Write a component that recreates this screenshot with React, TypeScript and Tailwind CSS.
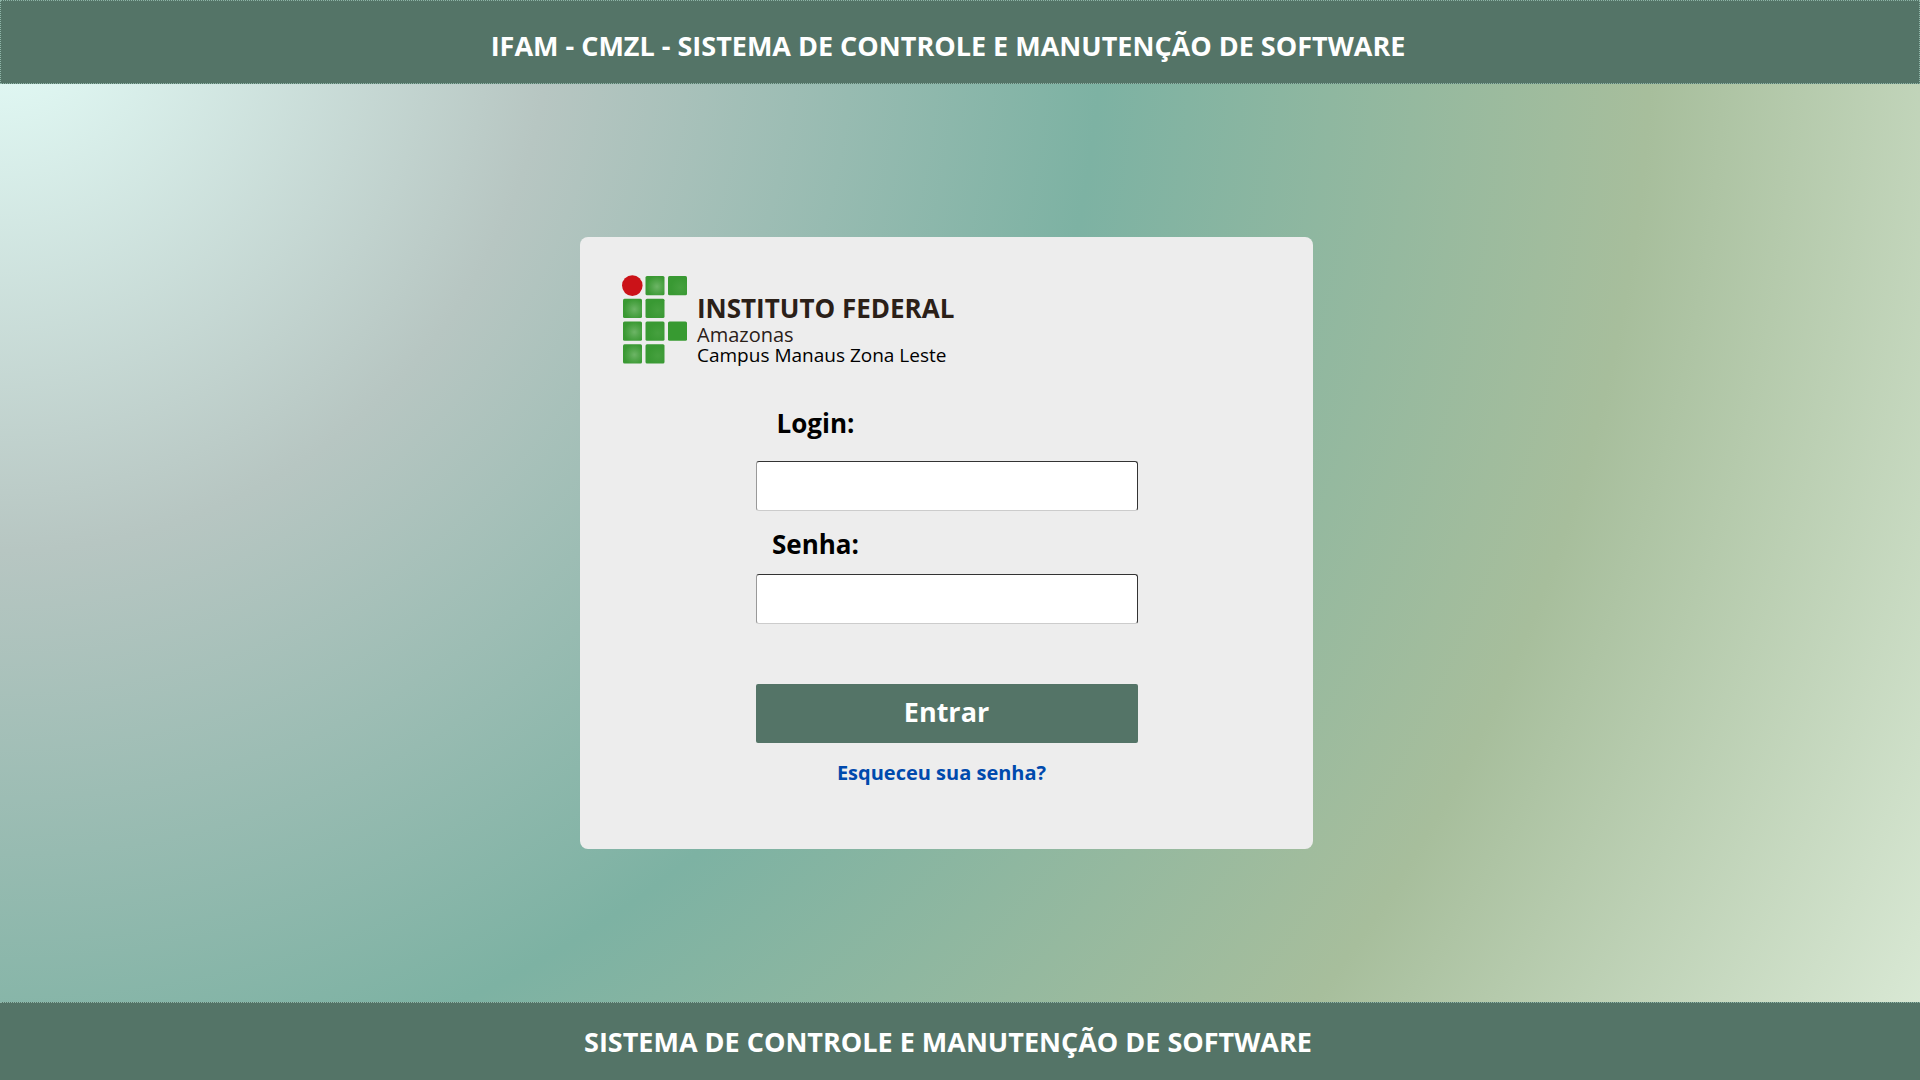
import React from "react";

type Tile = { x: number; y: number; shine?: "strong" | "soft" };

const tiles: Tile[] = [
  { x: 23.5, y: 1, shine: "strong" },
  { x: 46, y: 1, shine: "soft" },
  { x: 1, y: 23.7, shine: "strong" },
  { x: 23.5, y: 23.7, shine: "soft" },
  { x: 1, y: 46.5, shine: "strong" },
  { x: 23.5, y: 46.5, shine: "soft" },
  { x: 46, y: 46.5 },
  { x: 1, y: 69.2, shine: "strong" },
  { x: 23.5, y: 69.2, shine: "soft" },
];

function LogoMark() {
  return (
    <svg width="66" height="90" viewBox="0 0 66 90" aria-hidden="true" className="shrink-0">
      <defs>
        <radialGradient id="strong" cx="0.6" cy="0.55" r="0.55">
          <stop offset="0" stopColor="#6db566" />
          <stop offset="0.5" stopColor="#52a64b" />
          <stop offset="1" stopColor="#3a9933" />
        </radialGradient>
        <radialGradient id="soft" cx="0.65" cy="0.6" r="0.5">
          <stop offset="0" stopColor="#46a03f" />
          <stop offset="1" stopColor="#399933" />
        </radialGradient>
      </defs>
      <circle cx="10.3" cy="10.6" r="10.3" fill="#cb1218" />
      {tiles.map((t) => (
        <rect
          key={`${t.x}-${t.y}`}
          x={t.x}
          y={t.y}
          width="19"
          height="19.2"
          rx="1.5"
          fill={t.shine === "strong" ? "url(#strong)" : t.shine === "soft" ? "url(#soft)" : "#379a31"}
        />
      ))}
    </svg>
  );
}

function Brand() {
  return (
    <div className="flex">
      <LogoMark />
      <div className="flex flex-col pt-[17px] pl-[9px] whitespace-nowrap">
        <p className="text-[26px] leading-8 font-bold text-[#2b2018]">INSTITUTO FEDERAL</p>
        <p className="text-xl leading-[21px] text-[#2b2018]">Amazonas</p>
        <p className="text-[19px] leading-[21px] text-black">Campus Manaus Zona Leste</p>
      </div>
    </div>
  );
}

export default function App() {
  const field =
    "block h-[50px] w-full rounded-[3px] border border-[#333] border-l-[#999] border-b-[#ccc] bg-white px-3 text-xl outline-none";
  const label = "block w-[120px] text-center text-[26px] leading-9 font-bold text-black";
  return (
    <div className="flex min-h-screen flex-col bg-[radial-gradient(circle_at_0_0,#e6fffa_0%,#b7c6c2_25%,#7db2a3_50%,#a7be9c_75%,#dcebd8_100%)] font-['Open_Sans',sans-serif]">
      <header className="flex h-[84px] items-center justify-center border border-dotted border-[#8fb5a8] bg-[#547467] pt-2 pr-6">
        <h1 className="text-[27px] leading-9 font-bold text-white">
          IFAM - CMZL - SISTEMA DE CONTROLE E MANUTENÇÃO DE SOFTWARE
        </h1>
      </header>

      <main className="flex grow items-center justify-center pr-[27px]">
        <section className="w-[733px] rounded-lg bg-[#ededed] px-[42px] pt-[38px] pb-[62px]">
          <Brand />
          <form className="mx-auto mt-[39px] w-[382px]" onSubmit={(e) => e.preventDefault()}>
            <label htmlFor="login" className={label}>
              Login:
            </label>
            <input id="login" type="text" className={`${field} mt-5`} />
            <label htmlFor="senha" className={`${label} mt-[15px]`}>
              Senha:
            </label>
            <input id="senha" type="password" className={`${field} mt-3`} />
            <button
              type="submit"
              className="mt-[60px] block h-[59px] w-full rounded-[2px] bg-[#547467] pb-1 text-[27px] leading-9 font-bold text-white"
            >
              Entrar
            </button>
            <p className="mt-4 pr-2.5 text-center text-xl leading-7 font-bold">
              <a href="#" className="text-[#004aad]">
                Esqueceu sua senha?
              </a>
            </p>
          </form>
        </section>
      </main>

      <footer className="flex h-[78px] items-center justify-center border-t border-dotted border-[#8fb5a8] bg-[#547467] pr-6">
        <p className="text-[27px] leading-9 font-bold text-white">SISTEMA DE CONTROLE E MANUTENÇÃO DE SOFTWARE</p>
      </footer>
    </div>
  );
}
